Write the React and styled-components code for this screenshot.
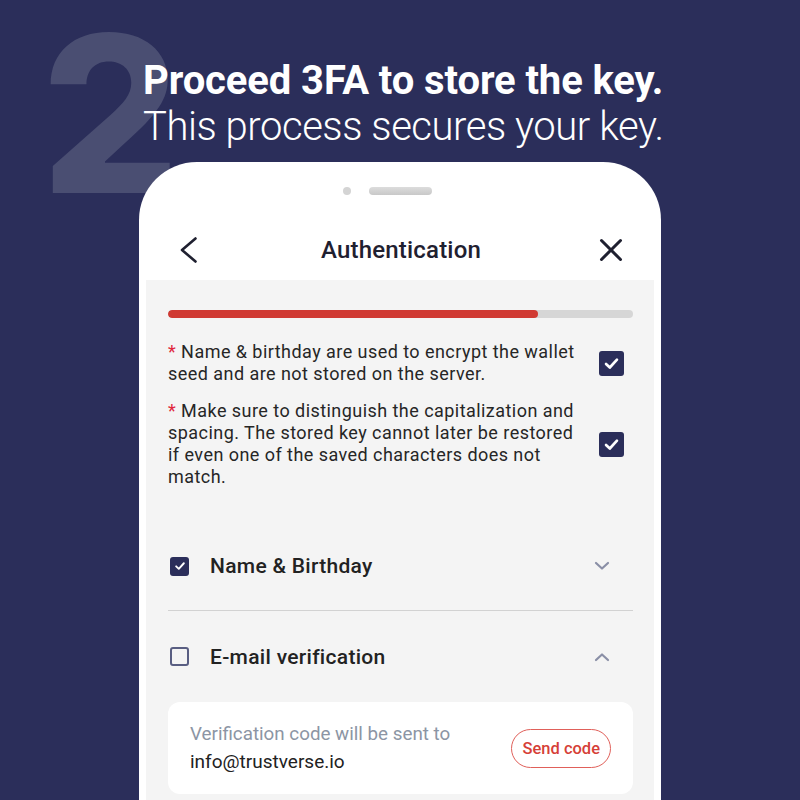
import React from "react";
import styled, { createGlobalStyle } from "styled-components";

const Global = createGlobalStyle`
  html, body { margin: 0; padding: 0; background: #2b2e5a; }
  body { font-family: Roboto, "Noto Sans", sans-serif; }
`;

const Page = styled.div`
  position: relative;
  width: 800px;
  height: 800px;
  overflow: hidden;
  background: #2b2e5a;
  display: flex;
  flex-direction: column;
`;

const BigNumber = styled.div`
  position: absolute;
  left: 41px;
  top: 5px;
  font-family: Inter, sans-serif;
  font-weight: 800;
  font-size: 218px;
  line-height: 1;
  color: #4a4e72;
  z-index: 0;
`;

const Heading = styled.div`
  position: relative;
  z-index: 1;
  margin: 58px 0 0 143px;
  color: #fff;
`;

const Title = styled.div`
  font-weight: 700;
  font-size: 40px;
  line-height: 46px;
  letter-spacing: -0.1px;
  white-space: nowrap;
`;

const Subtitle = styled.div`
  font-weight: 300;
  font-size: 40px;
  line-height: 46px;
  letter-spacing: -0.45px;
  white-space: nowrap;
`;

const Phone = styled.div`
  position: relative;
  z-index: 1;
  margin: 12px 0 0 139px;
  width: 522px;
  flex: 1;
  background: #fff;
  border-radius: 58px 58px 0 0;
  display: flex;
  flex-direction: column;
`;

const Notch = styled.div`
  display: flex;
  align-items: center;
  justify-content: center;
  gap: 18px;
  margin-top: 25px;
  height: 8px;
  padding-right: 25px;
`;

const Dot = styled.div`
  width: 8px;
  height: 8px;
  border-radius: 50%;
  background: #d4d4d4;
`;

const Pill = styled.div`
  width: 63px;
  height: 8px;
  border-radius: 4px;
  background: linear-gradient(#dcdcdc, #c8c8c8);
`;

const Header = styled.div`
  height: 85px;
  padding: 25px 38px 0 40px;
  box-sizing: border-box;
  display: flex;
  align-items: center;
  justify-content: space-between;
`;

const HeaderTitle = styled.div`
  font-size: 24px;
  font-weight: 500;
  color: #1f2030;
  letter-spacing: 0.2px;
`;

const IconBtn = styled.div`
  width: 24px;
  height: 26px;
  display: flex;
  align-items: center;
  justify-content: ${(p) => (p.start ? "flex-start" : "center")};
`;

const Screen = styled.div`
  flex: 1;
  margin: 0 7px;
  background: #f4f4f4;
  padding: 30px 21px 0 22px;
  display: flex;
  flex-direction: column;
`;

const Progress = styled.div`
  height: 8px;
  border-radius: 4px;
  background: #d6d6d6;
  overflow: hidden;
`;

const ProgressFill = styled.div`
  height: 100%;
  border-radius: 4px;
  background: #d03a33;
`;

const Notes = styled.div`
  margin-top: 23px;
  display: flex;
  flex-direction: column;
  gap: 15px;
`;

const Note = styled.div`
  display: flex;
  align-items: center;
  justify-content: space-between;
  padding-right: 9px;
`;

const NoteText = styled.div`
  width: 414px;
  font-size: 18px;
  line-height: 22px;
  color: #262626;
  letter-spacing: 0.45px;
`;

const Star = styled.span`
  color: #e0263c;
`;

const Box = styled.div`
  width: ${(p) => p.size}px;
  height: ${(p) => p.size}px;
  box-sizing: border-box;
  border-radius: 3px;
  flex-shrink: 0;
  display: flex;
  align-items: center;
  justify-content: center;
  background: ${(p) => (p.checked ? "#2b2e5a" : "transparent")};
  border: ${(p) => (p.checked ? "none" : "2px solid #595e82")};
`;

const Accordion = styled.div`
  margin-top: 34px;
  display: flex;
  flex-direction: column;
`;

const Row = styled.div`
  height: ${(p) => p.h}px;
  display: flex;
  align-items: center;
  padding: 0 23px 0 2px;
`;

const RowLabel = styled.div`
  flex: 1;
  margin-left: 21px;
  font-size: 21px;
  font-weight: 500;
  color: #222;
  letter-spacing: 0.3px;
`;

const Divider = styled.div`
  height: 1px;
  background: #d2d2d2;
`;

const Card = styled.div`
  height: 92px;
  background: #fff;
  border-radius: 12px;
  padding: 0 22px;
  display: flex;
  align-items: center;
  justify-content: space-between;
`;

const CardText = styled.div`
  display: flex;
  flex-direction: column;
`;

const Hint = styled.div`
  font-size: 18.8px;
  line-height: 27px;
  color: #8c95a4;
`;

const Email = styled.div`
  font-size: 19px;
  line-height: 27px;
  color: #222;
`;

const SendBtn = styled.div`
  height: 39px;
  padding: 0 10px;
  box-sizing: border-box;
  border: 1.5px solid #e0605a;
  border-radius: 20px;
  display: flex;
  align-items: center;
  font-size: 16.5px;
  font-weight: 500;
  color: #d63f38;
`;

const Check = ({ s = 14 }) => (
  <svg width={s} height={s} viewBox="0 0 14 14">
    <path d="M2.5 7.4 L5.6 10.3 L11.5 3.8" fill="none" stroke="#fff" strokeWidth="2.2" strokeLinecap="round" strokeLinejoin="round" />
  </svg>
);

const Chevron = ({ up }) => (
  <svg width="16" height="10" viewBox="0 0 16 10">
    <path d={up ? "M2 8 L8 2.5 L14 8" : "M2 2 L8 7.5 L14 2"} fill="none" stroke="#8a8fa6" strokeWidth="2.2" strokeLinecap="round" strokeLinejoin="round" />
  </svg>
);

export default function App() {
  return (
    <Page>
      <Global />
      <BigNumber>2</BigNumber>
      <Heading>
        <Title>Proceed 3FA to store the key.</Title>
        <Subtitle>This process secures your key.</Subtitle>
      </Heading>
      <Phone>
        <Notch>
          <Dot />
          <Pill />
        </Notch>
        <Header>
          <IconBtn start>
            <svg width="19" height="26" viewBox="0 0 19 26">
              <path d="M16.5 1.5 L3 13 L16.5 24.5" fill="none" stroke="#1f2030" strokeWidth="2.6" strokeLinecap="round" strokeLinejoin="round" />
            </svg>
          </IconBtn>
          <HeaderTitle>Authentication</HeaderTitle>
          <IconBtn>
            <svg width="24" height="24" viewBox="0 0 24 24">
              <path d="M2.5 2.5 L21.5 21.5 M21.5 2.5 L2.5 21.5" fill="none" stroke="#1f2030" strokeWidth="3" strokeLinecap="round" />
            </svg>
          </IconBtn>
        </Header>
        <Screen>
          <Progress>
            <ProgressFill style={{ width: "79.5%" }} />
          </Progress>
          <Notes>
            <Note>
              <NoteText>
                <Star>*</Star> Name &amp; birthday are used to encrypt the wallet seed and are not stored on the server.
              </NoteText>
              <Box size={25} checked>
                <Check s={17} />
              </Box>
            </Note>
            <Note>
              <NoteText>
                <Star>*</Star> Make sure to distinguish the capitalization and spacing. The stored key cannot later be restored if even one of the saved characters does not match.
              </NoteText>
              <Box size={25} checked>
                <Check s={17} />
              </Box>
            </Note>
          </Notes>
          <Accordion>
            <Row h={88}>
              <Box size={19} checked>
                <Check s={12} />
              </Box>
              <RowLabel>Name &amp; Birthday</RowLabel>
              <Chevron />
            </Row>
            <Divider />
            <Row h={91}>
              <Box size={19} />
              <RowLabel>E-mail verification</RowLabel>
              <Chevron up />
            </Row>
            <Card>
              <CardText>
                <Hint>Verification code will be sent to</Hint>
                <Email>info@trustverse.io</Email>
              </CardText>
              <SendBtn>Send code</SendBtn>
            </Card>
          </Accordion>
        </Screen>
      </Phone>
    </Page>
  );
}
